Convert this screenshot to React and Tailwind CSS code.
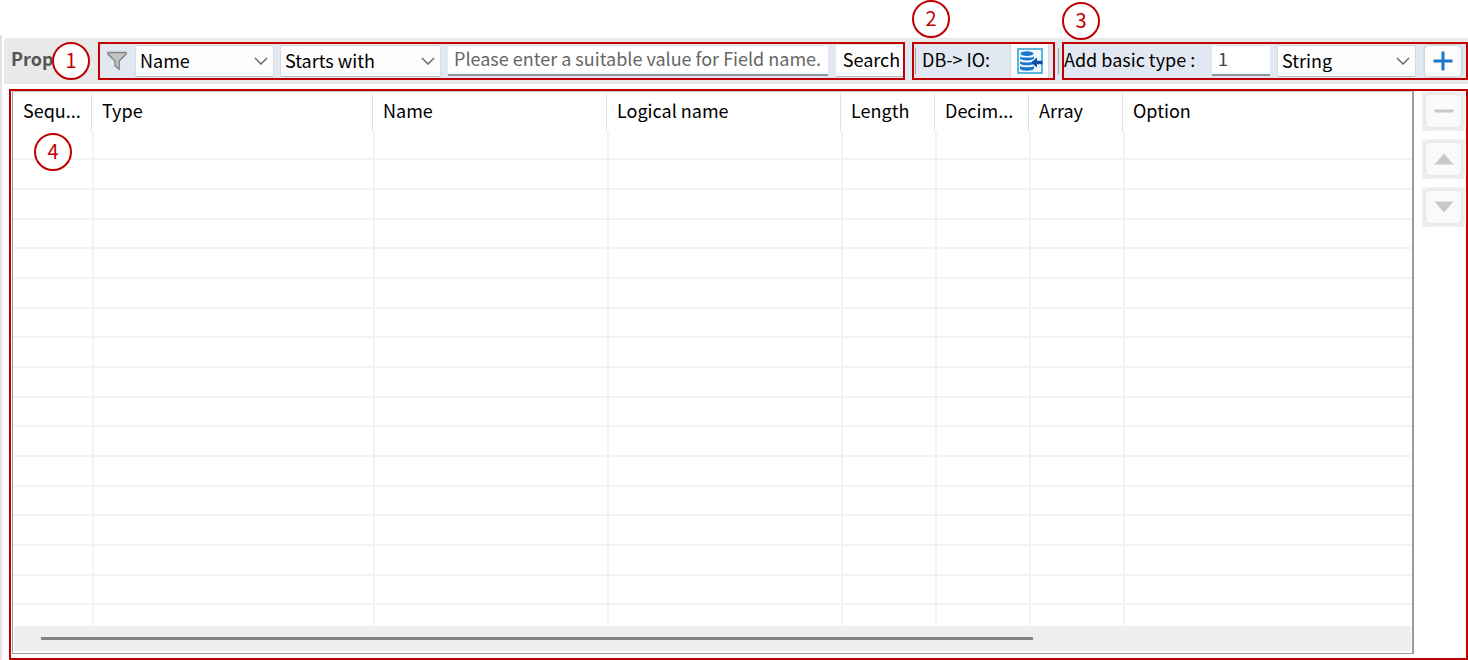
import clsx from "clsx";

const columns = [
    { label: "Sequ...", width: "w-[81px]" },
    { label: "Type", width: "w-[281px]" },
    { label: "Name", width: "w-[234px]" },
    { label: "Logical name", width: "w-[234px]" },
    { label: "Length", width: "w-[94px]" },
    { label: "Decim...", width: "w-[94px]" },
    { label: "Array", width: "w-[94px]" },
    { label: "Option", width: "" },
];

const emptyRows = Array.from({ length: 17 }, (_, i) => i);

function Callout({ number, className }) {
    return (
        <span
            className={clsx(
                "absolute z-10 flex size-[38px] items-center justify-center rounded-full border-2 border-[#c00000] bg-white pb-0.5 text-xl font-normal text-[#c00000]",
                className
            )}
        >
            {number}
        </span>
    );
}

function Dropdown({ label, options, className }) {
    return (
        <div className={clsx("relative shrink-0", className)}>
            <select
                aria-label={label}
                className="h-8 w-full appearance-none rounded-xs border border-[#d6d9de] border-b-[#b9bcc0] bg-[#fdfdfd] pb-1 pl-1 text-black"
            >
                {options.map((option) => (
                    <option key={option}>{option}</option>
                ))}
            </select>
            <svg
                className="pointer-events-none absolute top-3 right-1.5 h-2 w-3.5"
                viewBox="0 0 14 8"
                fill="none"
                stroke="#6b6b6b"
                strokeWidth="1.5"
            >
                <path d="M1 1l6 6 6-6" />
            </svg>
        </div>
    );
}

function FunnelIcon() {
    return (
        <svg className="h-5 w-5 shrink-0" viewBox="0 0 20 20">
            <path
                d="M1 1.5h18v1.6L12.2 10v8.2L8 14.6V10L1 3.1z"
                fill="#c4c4c4"
                stroke="#858585"
                strokeWidth="1.4"
            />
        </svg>
    );
}

function DatabaseIcon() {
    return (
        <svg className="h-[26px] w-[26px]" viewBox="0 0 26 26">
            <rect x="1" y="1" width="24" height="24" fill="#eef8fc" stroke="#35a6d6" strokeWidth="1.6" />
            <g fill="#1877cc">
                <ellipse cx="10" cy="5.6" rx="6.5" ry="2.3" />
                <path d="M3 8.4q1 1.200 7 1.200t7-1.200v2.200q-1 1.800-7 1.800t-7-1.800z" />
                <path d="M3 13.200q1 1.200 7 1.200t7-1.200v2.200q-1 1.800-7 1.800t-7-1.800z" />
                <path d="M3 18q1 1.200 7 1.200t7-1.200v2.600q-1 2.200-7 2.200t-7-2.200z" />
            </g>
            <path d="M14 14.500l6-5v3.300h5.500v3.400H20v3.300z" fill="#0f4fa8" />
        </svg>
    );
}

function SideButton({ label, children }) {
    return (
        <div className="bg-[#f0f0f0] p-0.5">
            <button
                aria-label={label}
                disabled
                className="flex h-9 w-full items-center justify-center rounded-md border-2 border-[#e9e9e9] bg-[#fafafa]"
            >
                <svg className="h-3 w-5" viewBox="0 0 20 12" fill="#c8c8c8">
                    {children}
                </svg>
            </button>
        </div>
    );
}

export default function App() {
    return (
        <div className="bg-white pt-[35px] font-['Noto_Sans_CJK_KR','Noto_Sans',sans-serif] text-lg text-black">
            <div className="border-l-2 border-[#e2e2e2] pt-[3px]">
                {/* Toolbar */}
                <div className="ml-0.5 flex rounded-tl-sm bg-[#e9e9e9] py-1">
                    <div className="relative w-[94px] shrink-0 pl-[7px] leading-8 font-bold text-[#555]">
                        Prop
                        <Callout number={1} className="top-0 left-12" />
                    </div>

                    <div className="flex flex-1 bg-[#e1e8f1]">
                        {/* Filter */}
                        <div className="flex h-[38px] flex-1 items-center border-2 border-[#c00000] pl-[7px]">
                            <FunnelIcon />
                            <Dropdown
                                label="Filter field"
                                options={["Name", "Type", "Logical name"]}
                                className="ml-2 w-[139px]"
                            />
                            <Dropdown
                                label="Filter condition"
                                options={["Starts with", "Ends with", "Contains"]}
                                className="ml-1.5 w-[161px]"
                            />
                            <input
                                type="text"
                                aria-label="Filter value"
                                placeholder="Please enter a suitable value for Field name."
                                className="ml-[7px] h-[30px] min-w-0 flex-1 border-b-2 border-[#8f9399] bg-white pb-1 pl-1.5 placeholder:text-[#666]"
                            />
                            <button className="ml-2 h-8 w-[67px] shrink-0 border-b border-[#b9bcc0] bg-[#fdfdfd] pb-1 pl-1">
                                Search
                            </button>
                        </div>

                        {/* DB import */}
                        <div className="relative ml-[7px] flex h-[38px] w-[143px] items-center border-2 border-[#c00000]">
                            <Callout number={2} className="-top-11 -left-0.5" />
                            <div className="ml-px h-[26px] w-px bg-[#a0a0a0]" />
                            <span className="ml-1.5 flex-1 pb-1 whitespace-nowrap">DB-&gt; IO:</span>
                            <button
                                aria-label="Import from DB"
                                className="mr-1 flex h-[34px] w-[39px] items-center justify-center border-x border-[#d6d9de] bg-[#fdfdfd]"
                            >
                                <DatabaseIcon />
                            </button>
                        </div>
                        <div className="mx-[3px] h-[26px] w-px self-center bg-[#a0a0a0]" />

                        {/* Add basic type */}
                        <div className="relative flex h-[38px] w-[406px] items-center border-2 border-[#c00000]">
                            <Callout number={3} className="-top-[42px] -left-0.5" />
                            <label htmlFor="type-count" className="flex-1 pb-1 whitespace-nowrap">
                                Add basic type :
                            </label>
                            <input
                                id="type-count"
                                type="text"
                                defaultValue="1"
                                className="h-[30px] w-[58px] border-b-2 border-[#8f9399] bg-white pb-1 pl-1.5 text-[#444]"
                            />
                            <Dropdown
                                label="Basic type"
                                options={["String", "Integer", "Long"]}
                                className="ml-[7px] w-[139px]"
                            />
                            <button
                                aria-label="Add"
                                className="mr-[3px] ml-[7px] flex h-[34px] w-10 items-center justify-center rounded-md border-2 border-[#d6d9de] bg-[#fdfdfd]"
                            >
                                <svg className="size-5" viewBox="0 0 20 20" stroke="#1877cc" strokeWidth="3">
                                    <path d="M10 0.500v19M0.500 10h19" />
                                </svg>
                            </button>
                        </div>
                    </div>
                </div>

                {/* Field list */}
                <div className="relative mt-[5px] ml-[7px] flex border-2 border-[#c00000] pb-1 pl-px">
                    <Callout number={4} className="top-[42px] left-[23px]" />
                    <div className="flex-1 border border-r-2 border-[#989ba1] border-t-[#c8c8c8] pb-0.5">
                        <table className="w-full table-fixed border-separate border-spacing-0">
                            <thead>
                                <tr className="h-[39px]">
                                    {columns.map((col) => (
                                        <th key={col.label} className={clsx("group p-0 text-left font-normal", col.width)}>
                                            <div className="mr-0.5 h-[38px] border-r border-[#e2e2e2] pb-1 pl-2 leading-[34px] whitespace-nowrap group-first:pl-2.5 group-last:border-r-0">
                                                {col.label}
                                            </div>
                                        </th>
                                    ))}
                                </tr>
                            </thead>
                            <tbody>
                                {emptyRows.map((row) => (
                                    <tr key={row} className="group h-[30px] last:h-5 [&:nth-child(3n+1)]:h-[29px]">
                                        {columns.map((col) => (
                                            <td
                                                key={col.label}
                                                className="border-r-2 border-b-2 border-[#f2f2f2] p-0 group-last:border-b-0 last:border-r-0"
                                            />
                                        ))}
                                    </tr>
                                ))}
                            </tbody>
                        </table>

                        {/* Horizontal scrollbar */}
                        <div className="mx-px mt-px flex h-[25px] items-center bg-[#efefef]">
                            <div className="ml-[27px] h-[3px] w-[71%] bg-[#848484]" />
                        </div>
                    </div>

                    <div className="mr-px ml-2 flex w-[43px] flex-col gap-2">
                        <SideButton label="Remove">
                            <path d="M0.500 4.500h19v3h-19z" />
                        </SideButton>
                        <SideButton label="Move up">
                            <path d="M10 0.500l9.500 11h-19z" />
                        </SideButton>
                        <SideButton label="Move down">
                            <path d="M10 11.500l9.500-11h-19z" />
                        </SideButton>
                    </div>
                </div>
            </div>
        </div>
    );
}
